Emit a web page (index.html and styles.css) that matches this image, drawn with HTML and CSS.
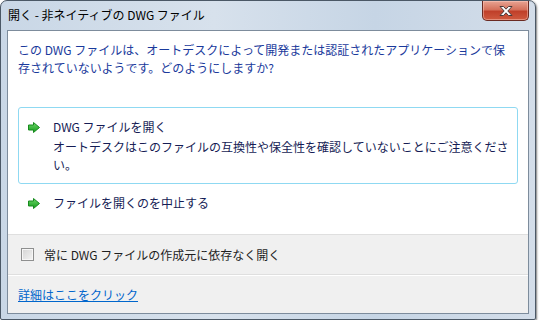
FILE: index.html
```html
<!DOCTYPE html>
<html lang="ja">
<head>
    <meta charset="UTF-8">
    <title>開く - 非ネイティブの DWG ファイル</title>
    <link rel="stylesheet" href="styles.css">
</head>
<body>

    <div class="window">
        <div class="titlebar">
            <span class="title">開く - 非ネイティブの DWG ファイル</span>
            <button class="close" type="button">
                <svg width="16" height="12" viewBox="0 0 16 12">
                    <path d="M2 1.5h3.5L8 4.2l2.5-2.7H14L9.8 6l4.2 4.5h-3.5L8 7.8l-2.5 2.7H2L6.2 6z"
                          fill="#fff" stroke="#4a3a3a" stroke-width="1" stroke-linejoin="round"/>
                </svg>
            </button>
        </div>

        <div class="client">
            <div class="content">
                <p class="instruction">この DWG ファイルは、オートデスクによって開発または認証されたアプリケーションで保存されていないようです。どのようにしますか?</p>

                <a class="command selected" href="#">
                    <svg class="arrow" width="12" height="11" viewBox="0 0 12 11">
                        <defs>
                            <linearGradient id="g1" x1="0" y1="0" x2="0" y2="1">
                                <stop offset="0" stop-color="#6fd86a"/>
                                <stop offset="1" stop-color="#129a1a"/>
                            </linearGradient>
                        </defs>
                        <path d="M0.5 3h5v-2.5l6 5-6 5v-2.5h-5z" fill="url(#g1)" stroke="#178a1e" stroke-width="1" stroke-linejoin="round"/>
                    </svg>
                    <span class="command-text">
                        <span class="command-title">DWG ファイルを開く</span>
                        <span class="command-desc">オートデスクはこのファイルの互換性や保全性を確認していないことにご注意ください。</span>
                    </span>
                </a>

                <a class="command" href="#">
                    <svg class="arrow" width="12" height="11" viewBox="0 0 12 11">
                        <path d="M0.5 3h5v-2.5l6 5-6 5v-2.5h-5z" fill="url(#g1)" stroke="#178a1e" stroke-width="1" stroke-linejoin="round"/>
                    </svg>
                    <span class="command-text">
                        <span class="command-title">ファイルを開くのを中止する</span>
                    </span>
                </a>
            </div>

            <div class="footer">
                <label class="verify">
                    <span class="checkbox"></span>
                    常に DWG ファイルの作成元に依存なく開く
                </label>
                <div class="details">
                    <a href="#">詳細はここをクリック</a>
                </div>
            </div>
        </div>
    </div>

</body>
</html>
```

FILE: styles.css
```css
body {
    margin: 0;
    padding: 0;
    background-color: #fff;
    font-family: "Noto Sans CJK JP", sans-serif;
    font-size: 12px;
}
.window {
    width: 534px;
    height: 318px;
    border: 1px solid #4b5866;
    border-radius: 7px 7px 2px 2px;
    background: linear-gradient(to right, #c9d7e6, #d7e1ec 40%, #c6d5e5 70%, #d3dde9);
    box-shadow: 1px 1px 2px rgba(0, 0, 0, 0.5);
    display: flex;
    flex-direction: column;
}
.titlebar {
    height: 29px;
    display: flex;
    align-items: flex-start;
    justify-content: space-between;
    padding: 0 6px 0 7px;
}
.title {
    margin-top: 5px;
    color: #000;
    line-height: 18px;
}
.close {
    width: 47px;
    height: 20px;
    padding: 0;
    border: 1px solid #6a2a22;
    border-top: none;
    border-radius: 0 0 5px 5px;
    background: linear-gradient(#e8a493, #d5715c 45%, #c0402a 55%, #cf5a3f);
    box-shadow: inset 0 0 0 1px rgba(255, 210, 200, 0.45);
    display: flex;
    align-items: center;
    justify-content: center;
}
.client {
    flex: 1;
    margin: 0 6px 5px 6px;
    border: 1px solid #7d8c9c;
    background-color: #fff;
    display: flex;
    flex-direction: column;
}
.content {
    padding: 10px;
    height: 183px;
}
.instruction {
    margin: 0;
    width: 492px;
    line-height: 18px;
    color: #1a3a9c;
}
.command {
    display: flex;
    align-items: flex-start;
    gap: 13px;
    width: 481px;
    padding: 9px 8px 9px 9px;
    border: 1px solid transparent;
    border-radius: 3px;
    color: #151c55;
    text-decoration: none;
    line-height: 18px;
}
.command.selected {
    margin-top: 30px;
    border-color: #8fd9f2;
    padding-top: 10px;
}
.arrow {
    margin-top: 4px;
    flex: none;
}
.command-text {
    display: flex;
    flex-direction: column;
}
.command-title {
    margin-bottom: 2px;
}
.footer {
    flex: 1;
    background-color: #f0f0f0;
    border-top: 1px solid #dfdfdf;
    display: flex;
    flex-direction: column;
}
.verify {
    height: 39px;
    display: flex;
    align-items: center;
    gap: 10px;
    padding-left: 13px;
    color: #1e1e1e;
    border-bottom: 1px solid #dfdfdf;
    box-shadow: 0 1px 0 #fff;
}
.checkbox {
    width: 11px;
    height: 11px;
    border: 1px solid #8e8f8f;
    background: linear-gradient(135deg, #d4d4d4, #f4f4f4);
    box-shadow: inset 0 0 0 1px #f6f6f6;
}
.details {
    flex: 1;
    display: flex;
    align-items: center;
    padding-left: 10px;
}
.details a {
    color: #0066cc;
    text-decoration: underline;
}
```
